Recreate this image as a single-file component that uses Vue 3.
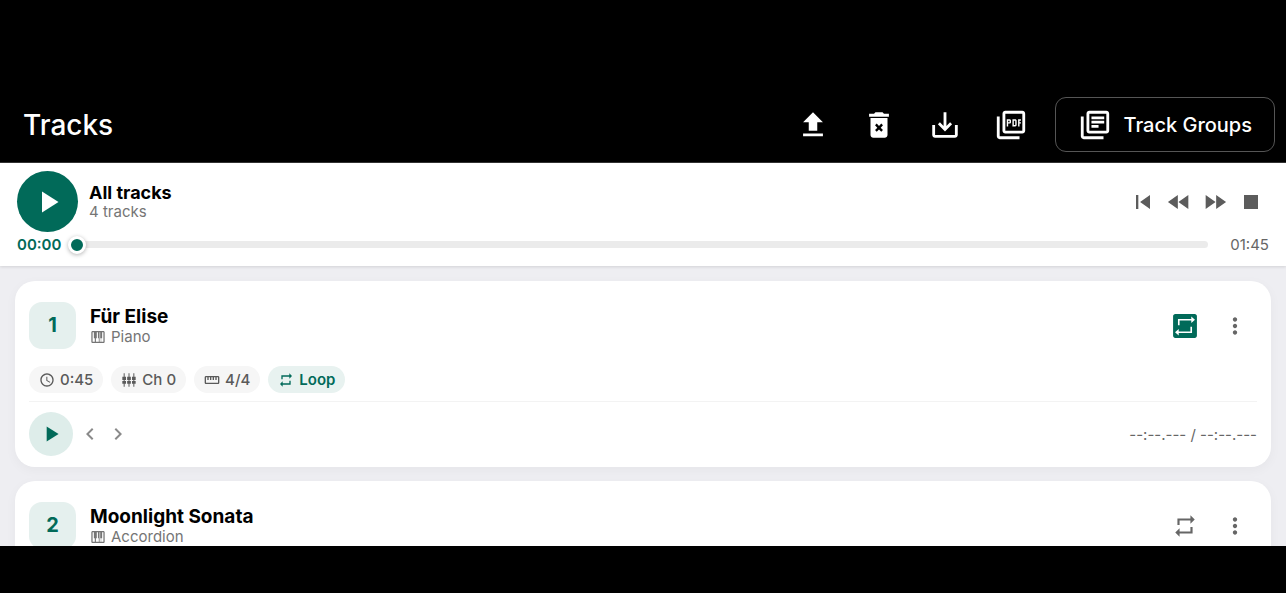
<script setup>
import { ref } from 'vue'

const icons = {
  upload: 'M5 20h14v-2H5v2zm0-10h4v6h6v-6h4l-7-7-7 7z',
  clear: 'M6 19c0 1.1.9 2 2 2h8c1.1 0 2-.9 2-2V7H6zM15.5 4l-1-1h-5l-1 1H5v2.2h14V4zM9.2 12.2l1.2-1.2 1.6 1.7 1.6-1.7 1.2 1.2-1.6 1.7 1.6 1.7-1.2 1.2-1.6-1.7-1.6 1.7-1.2-1.2 1.6-1.7z',
  save: 'M19 12v7H5v-7H3v7c0 1.1.9 2 2 2h14c1.1 0 2-.9 2-2v-7h-2zm-6 .67l2.59-2.58L17 11.5l-5 5-5-5 1.41-1.41L11 12.67V3h2v9.67z',
  pdf: 'M20 2H8c-1.1 0-2 .9-2 2v12c0 1.1.9 2 2 2h12c1.1 0 2-.9 2-2V4c0-1.1-.9-2-2-2zm0 14H8V4h12v12zM4 6H2v14c0 1.1.9 2 2 2h14v-2H4V6zm12 6V9c0-.55-.45-1-1-1h-2v5h2c.55 0 1-.45 1-1zm-2-3h1v3h-1V9zm4 2h1v-1h-1V9h1V8h-2v5h1v-2zm-8 0h1c.55 0 1-.45 1-1V9c0-.55-.45-1-1-1H9v5h1v-2zm0-2h1v1h-1V9z',
  library: 'M4 6H2v14c0 1.1.9 2 2 2h14v-2H4V6zm16-4H8c-1.1 0-2 .9-2 2v12c0 1.1.9 2 2 2h12c1.1 0 2-.9 2-2V4c0-1.1-.9-2-2-2zm0 14H8V4h12v12zM9.5 6h9v2h-9zm0 3h9v2h-9zm0 3h5v2h-5z',
  play: 'M8 5v14l11-7z',
  previous: 'M6 6h2v12H6zm3.5 6l8.5 6V6z',
  rewind: 'M11 18V6l-8.5 6 8.5 6zm.5-6l8.5 6V6l-8.5 6z',
  forward: 'M4 18l8.5-6L4 6v12zm9-12v12l8.5-6L13 6z',
  stop: 'M6 6h12v12H6z',
  piano: 'M20 3H4c-1.1 0-2 .9-2 2v14c0 1.1.9 2 2 2h16c1.1 0 2-.9 2-2V5c0-1.1-.9-2-2-2zM7.2 19.2H3.9V4.8h1.9v9h1.4zM13.2 14v5.2H8.9V14h1.3V4.8h1.7V14zM20.100 19.200h-3.300V14h1.400V4.800h1.900zM16.200 14v5.200h-1.800V14h-.1V4.800h1V14z',
  clock: 'M11.99 2C6.47 2 2 6.48 2 12s4.47 10 9.990 10C17.520 22 22 17.520 22 12S17.520 2 11.990 2zM12 20c-4.420 0-8-3.580-8-8s3.580-8 8-8 8 3.580 8 8-3.580 8-8 8zm.5-13H11v6l5.250 3.150.750-1.230-4.500-2.670z',
  channel: 'M4 2h1.500v5H7.500v5H5.500v1.500h2v4H5.500V22H4v-4.500H2v-4h2V12H2V7h2zM11.250 2h1.500v5h2v5h-2v1.500h2v4h-2V22h-1.500v-4.500h-2v-4h2V12h-2V7h2zM18.500 2H20v5h2v5h-2v1.500h2v4h-2V22h-1.500v-4.500h-2v-4h2V12h-2V7h2z',
  ruler: 'M21 6H3c-1.100 0-2 .9-2 2v8c0 1.100.9 2 2 2h18c1.100 0 2-.9 2-2V8c0-1.100-.9-2-2-2zm0 10H3V8h2v4h2V8h2v4h2V8h2v4h2V8h2v4h2V8h2v8z',
  repeat: 'M7 7h10v3l4-4-4-4v3H5v6h2V7zm10 10H7v-3l-4 4 4 4v-3h12v-6h-2v4z',
  repeatOn: 'M21 1H3c-1.100 0-2 .9-2 2v18c0 1.100.9 2 2 2h18c1.100 0 2-.9 2-2V3c0-1.100-.9-2-2-2zM5.500 5.500h12.300V3.200l3.400 3-3.400 3V6.900H7v4.300H5.500zM18.500 18.500H6.200v2.300l-3.400-3 3.400-3v2.300H17v-4.300h1.500z',
  more: 'M12 8c1.100 0 2-.9 2-2s-.9-2-2-2-2 .9-2 2 .9 2 2 2zm0 2c-1.100 0-2 .9-2 2s.9 2 2 2 2-.9 2-2-.9-2-2-2zm0 6c-1.100 0-2 .9-2 2s.9 2 2 2 2-.9 2-2-.9-2-2-2z',
  left: 'M15.410 7.410L14 6l-6 6 6 6 1.410-1.410L10.830 12z',
  right: 'M10 6L8.590 7.410 13.170 12l-4.580 4.590L10 18l6-6z',
}

const toolbar = [
  { icon: 'upload', label: 'Upload' },
  { icon: 'clear', label: 'Delete all' },
  { icon: 'save', label: 'Download' },
  { icon: 'pdf', label: 'Export PDF' },
]
const transport = [
  { icon: 'previous', label: 'Previous' },
  { icon: 'rewind', label: 'Rewind' },
  { icon: 'forward', label: 'Fast forward' },
  { icon: 'stop', label: 'Stop' },
]
const tracks = ref([
  { name: 'Für Elise', instrument: 'Piano', length: '0:45', channel: 'Ch 0', meter: '4/4', loop: true },
  { name: 'Moonlight Sonata', instrument: 'Accordion', length: '1:00', channel: 'Ch 1', meter: '4/4', loop: false },
])
const position = ref(0)
</script>

<template>
  <div class="screen">
    <header class="appbar">
      <h1>Tracks</h1>
      <button v-for="t in toolbar" :key="t.icon" class="tool" :aria-label="t.label">
        <svg viewBox="0 0 24 24"><path :d="icons[t.icon]" fill-rule="evenodd" /></svg>
      </button>
      <button class="groups">
        <svg viewBox="0 0 24 24"><path :d="icons.library" /></svg>
        <span>Track Groups</span>
      </button>
    </header>

    <section class="player">
      <div class="player-row">
        <button class="play-all" aria-label="Play all">
          <svg viewBox="0 0 24 24"><path :d="icons.play" /></svg>
        </button>
        <div class="player-text">
          <h2>All tracks</h2>
          <p>4 tracks</p>
        </div>
        <button v-for="t in transport" :key="t.icon" class="transport" :aria-label="t.label">
          <svg viewBox="0 0 24 24"><path :d="icons[t.icon]" /></svg>
        </button>
      </div>
      <div class="seek">
        <span class="now">00:00</span>
        <input v-model="position" type="range" min="0" max="105" aria-label="Position" />
        <span class="total">01:45</span>
      </div>
    </section>

    <main class="list">
      <article v-for="(t, i) in tracks" :key="t.name" class="card">
        <div class="card-head">
          <div class="badge">{{ i + 1 }}</div>
          <div class="card-title">
            <h3>{{ t.name }}</h3>
            <p>
              <svg viewBox="0 0 24 24"><path :d="icons.piano" fill-rule="evenodd" /></svg>
              {{ t.instrument }}
            </p>
          </div>
          <button class="action" :class="{ on: t.loop }" aria-label="Toggle loop" @click="t.loop = !t.loop">
            <svg viewBox="0 0 24 24">
              <path :d="t.loop ? icons.repeatOn : icons.repeat" fill-rule="evenodd" />
            </svg>
          </button>
          <button class="action" aria-label="More options">
            <svg viewBox="0 0 24 24"><path :d="icons.more" /></svg>
          </button>
        </div>
        <div class="chips">
          <span class="chip"><svg viewBox="0 0 24 24"><path :d="icons.clock" /></svg>{{ t.length }}</span>
          <span class="chip"><svg viewBox="0 0 24 24"><path :d="icons.channel" /></svg>{{ t.channel }}</span>
          <span class="chip"><svg viewBox="0 0 24 24"><path :d="icons.ruler" /></svg>{{ t.meter }}</span>
          <span v-if="t.loop" class="chip loop"><svg viewBox="0 0 24 24"><path :d="icons.repeat" /></svg>Loop</span>
        </div>
        <div class="card-foot">
          <button class="play" aria-label="Play">
            <svg viewBox="0 0 24 24"><path :d="icons.play" /></svg>
          </button>
          <button class="step" aria-label="Step back">
            <svg viewBox="0 0 24 24"><path :d="icons.left" /></svg>
          </button>
          <button class="step" aria-label="Step forward">
            <svg viewBox="0 0 24 24"><path :d="icons.right" /></svg>
          </button>
          <span class="clock">--:--.--- / --:--.---</span>
        </div>
      </article>
    </main>
  </div>
</template>

<style>
body {
  margin: 0;
  background: #000;
}
</style>

<style scoped>
.screen {
  box-sizing: border-box;
  height: 100vh;
  padding-bottom: 47px;
  display: flex;
  flex-direction: column;
  background: #000;
  color: #000;
  font-family: Inter, "Liberation Sans", sans-serif;
}
h1, h2, h3, p {
  margin: 0;
}
button {
  display: flex;
  align-items: center;
  justify-content: center;
  flex: none;
  margin: 0;
  padding: 0;
  border: 0;
  background: none;
  color: inherit;
  font: inherit;
}
svg {
  display: block;
  flex: none;
  fill: currentColor;
}
.appbar {
  flex: none;
  display: flex;
  align-items: center;
  padding: 97px 11px 10px 23px;
  border-bottom: 1px solid #333;
  color: #fff;
}
h1 {
  flex: 1;
  font-size: 28px;
  line-height: 36px;
  font-weight: 500;
}
.tool {
  width: 66px;
  height: 48px;
}
.tool svg,
.groups svg {
  width: 34px;
  height: 34px;
}
.groups {
  box-sizing: border-box;
  height: 55px;
  margin-left: 11px;
  padding: 0 22px;
  gap: 11px;
  border: 1px solid #555;
  border-radius: 11px;
  font-size: 20px;
  font-weight: 500;
}
.player {
  flex: none;
  position: relative;
  padding: 8px 17px 10px;
  background: #fff;
  box-shadow: 0 1px 3px rgba(0, 0, 0, 0.12);
}
.player-row {
  display: flex;
  align-items: center;
}
.play-all {
  width: 61px;
  height: 61px;
  border-radius: 50%;
  background: #016a59;
  color: #fff;
}
.play-all svg {
  width: 36px;
  height: 36px;
}
.player-text {
  flex: 1;
  padding-left: 11px;
}
h2 {
  font-size: 18px;
  line-height: 20px;
  font-weight: 700;
}
.player-text p {
  font-size: 15px;
  line-height: 18px;
  color: #757575;
}
.transport {
  width: 36px;
  height: 36px;
  color: #5c5c5c;
}
.transport svg {
  width: 28px;
  height: 28px;
}
.seek {
  display: flex;
  align-items: center;
  height: 24px;
  font-size: 15px;
}
.now {
  color: #016a59;
  font-weight: 600;
}
.total {
  margin-left: 22px;
  color: #666;
}
.seek input {
  appearance: none;
  flex: 1;
  min-width: 0;
  height: 18px;
  margin: 0 0 0 7px;
  background: none;
}
.seek input::-webkit-slider-runnable-track {
  height: 7px;
  margin-left: 9px;
  border-radius: 4px;
  background: #ebebeb;
}
.seek input::-webkit-slider-thumb {
  appearance: none;
  box-sizing: border-box;
  width: 18px;
  height: 18px;
  margin: -5px 0 0 -9px;
  border: 3px solid #fff;
  border-radius: 50%;
  background: #016a59;
  box-shadow: 0 1px 4px rgba(0, 0, 0, 0.3);
}
.list {
  flex: 1;
  min-height: 0;
  overflow: hidden;
  display: flex;
  flex-direction: column;
  gap: 14px;
  padding: 15px 15px 0;
  background: #eeeef2;
}
.card {
  flex: none;
  padding: 14px 14px 11px;
  border-radius: 20px;
  background: #fff;
  box-shadow: 0 3px 12px rgba(0, 0, 0, 0.04);
}
.card-head {
  display: flex;
  align-items: center;
  height: 61px;
}
.badge {
  width: 47px;
  height: 47px;
  border-radius: 13px;
  background: #e5f0ee;
  color: #016a59;
  font-size: 20px;
  line-height: 47px;
  font-weight: 700;
  text-align: center;
}
.card-title {
  flex: 1;
  padding-left: 14px;
}
h3 {
  font-size: 19px;
  line-height: 22px;
  font-weight: 700;
}
.card-title p {
  display: flex;
  align-items: center;
  gap: 5px;
  font-size: 15px;
  line-height: 18px;
  color: #757575;
}
.card-title svg {
  width: 16px;
  height: 16px;
}
.action {
  width: 50px;
  height: 50px;
  color: #666;
}
.action svg {
  width: 26px;
  height: 26px;
}
.action:last-child {
  margin-right: -3px;
}
.action.on {
  color: #016a59;
}
.chips {
  display: flex;
  gap: 8px;
  padding: 10px 0 8px;
  border-bottom: 1px solid #f3f3f3;
}
.chip {
  display: flex;
  align-items: center;
  gap: 5px;
  height: 27px;
  padding: 0 10px;
  border-radius: 14px;
  background: #f6f6f6;
  color: #5a5a5a;
  font-size: 15px;
  font-weight: 500;
}
.chip svg {
  width: 16px;
  height: 16px;
}
.chip.loop {
  background: #e8f2f0;
  color: #016a59;
  font-weight: 600;
}
.card-foot {
  display: flex;
  align-items: center;
  padding-top: 10px;
}
.play {
  width: 44px;
  height: 44px;
  margin-right: 3px;
  border-radius: 50%;
  background: #deedea;
  color: #016a59;
}
.play svg {
  width: 26px;
  height: 26px;
}
.step {
  width: 28px;
  height: 28px;
  color: #8a8a8a;
}
.step svg {
  width: 24px;
  height: 24px;
}
.clock {
  margin-left: auto;
  color: #666;
  font-size: 15px;
}
</style>
